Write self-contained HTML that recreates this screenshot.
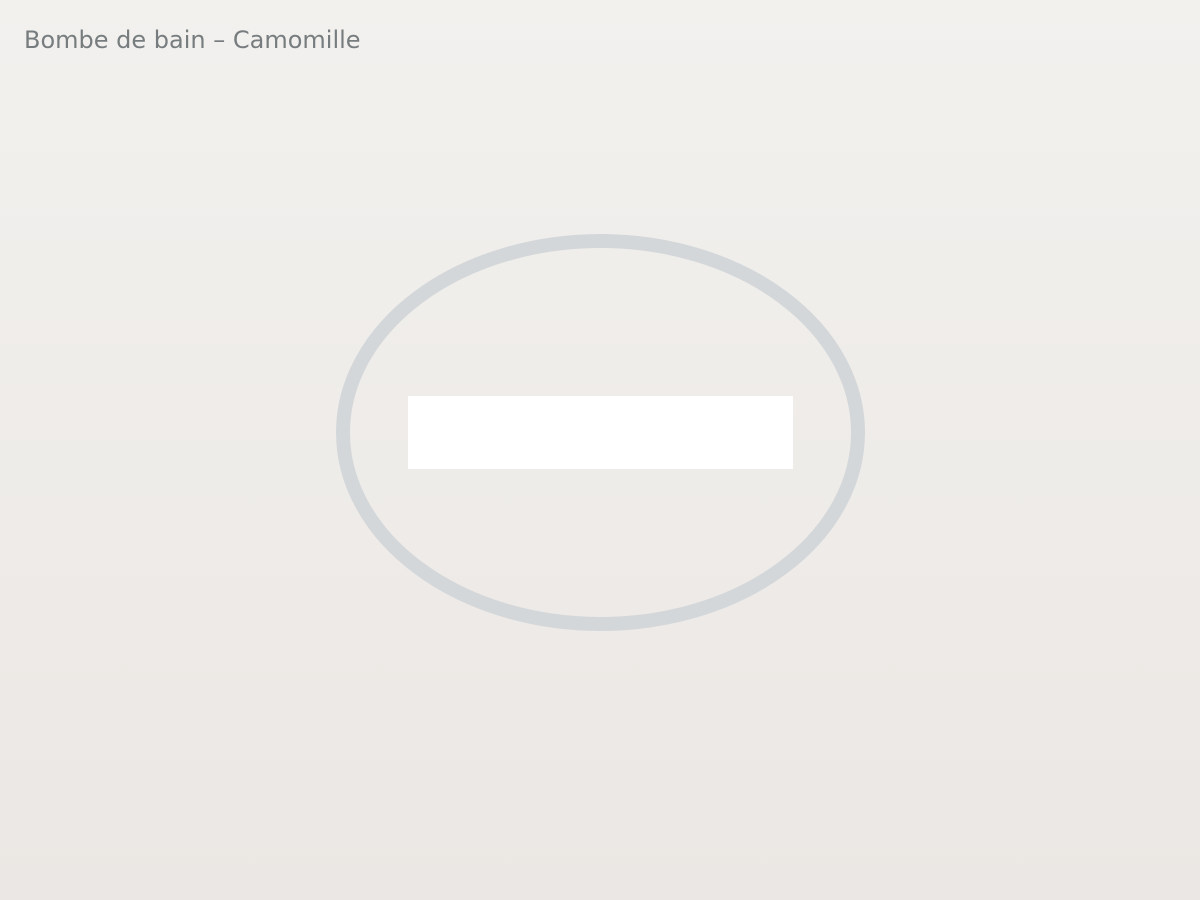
<!DOCTYPE html>
<html><head><meta charset="utf-8"><style>
html,body{margin:0;padding:0}
body{width:1200px;height:900px;overflow:hidden;background:linear-gradient(#f2f1ee,#ebe7e4);position:relative;font-family:"DejaVu Sans","Liberation Sans",sans-serif}
.t{position:absolute;left:24px;top:25px;font-size:24px;color:#777d7f;white-space:nowrap;line-height:30px}
svg{position:absolute;left:0;top:0}
</style></head><body>
<div class="t">Bombe de bain – Camomille</div>
<svg width="1200" height="900"><ellipse cx="600.5" cy="432.5" rx="257.5" ry="191.5" fill="none" stroke="#d4d7da" stroke-width="14"/><rect x="408" y="396" width="385" height="73" fill="#fff"/></svg>
</body></html>
